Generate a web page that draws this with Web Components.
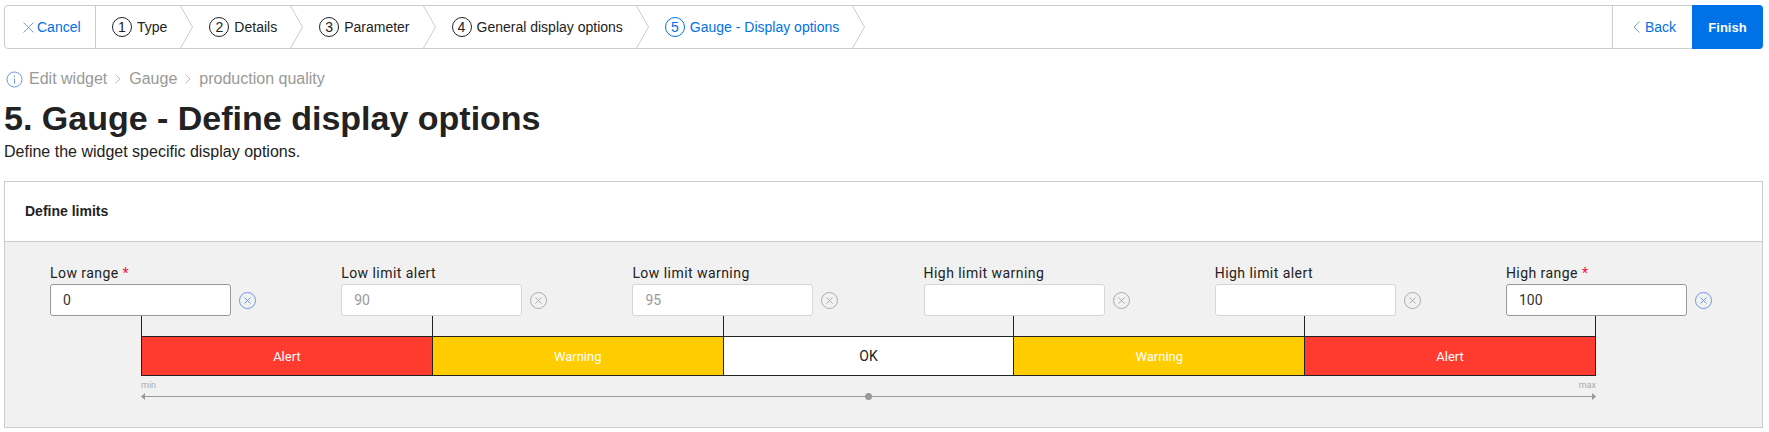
<!DOCTYPE html>
<html lang="en">
<head>
<meta charset="utf-8">
<title>Edit widget</title>
<style>
  body {
    margin: 0;
    background: #fff;
    color: #222;
    font-family: "Liberation Sans", Arial, sans-serif;
  }
  .page {
    padding: 5px 6px 0 4px;
  }
</style>
</head>
<body>
<div class="page">
  <wizard-bar>
    <wizard-step number="1">Type</wizard-step>
    <wizard-step number="2">Details</wizard-step>
    <wizard-step number="3">Parameter</wizard-step>
    <wizard-step number="4">General display options</wizard-step>
    <wizard-step number="5" active>Gauge - Display options</wizard-step>
  </wizard-bar>
  <page-head crumbs="Edit widget|Gauge|production quality" heading="5. Gauge - Define display options">
    Define the widget specific display options.
  </page-head>
  <limits-card heading="Define limits">
    <limit-field label="Low range" required value="0" active></limit-field>
    <limit-field label="Low limit alert" value="90"></limit-field>
    <limit-field label="Low limit warning" value="95"></limit-field>
    <limit-field label="High limit warning"></limit-field>
    <limit-field label="High limit alert"></limit-field>
    <limit-field label="High range" required value="100" active></limit-field>
    <gauge-scale slot="gauge"></gauge-scale>
  </limits-card>
</div>

<script>
class WizardBar extends HTMLElement {
  constructor() {
    super();
    this.attachShadow({ mode: 'open' });
    this.shadowRoot.innerHTML = `
      <style>
        :host {
          display: flex;
          height: 44px;
          box-sizing: border-box;
          border: 1px solid #ccc;
          border-radius: 4px;
          font-size: 14px;
          background: #fff;
        }
        .cancel, .back {
          display: flex;
          align-items: center;
          color: #0071e6;
          box-sizing: border-box;
        }
        .cancel {
          width: 91px;
          padding-left: 18px;
          gap: 3px;
          border-right: 1px solid #ccc;
        }
        .steps {
          display: flex;
          flex: 1;
        }
        .back {
          width: 80px;
          padding-left: 20px;
          gap: 5px;
          border-left: 1px solid #ccc;
        }
        .finish {
          display: flex;
          align-items: center;
          justify-content: center;
          width: 71px;
          margin: -1px -1px -1px 0;
          background: #0071e6;
          color: #fff;
          font-weight: bold;
          font-size: 13px;
          border-radius: 0 4px 4px 0;
        }
        svg { display: block; flex: none; }
      </style>
      <div class="cancel">
        <svg width="11" height="11" viewBox="0 0 11 11" fill="none" stroke="#7d9fe8" stroke-width="1"><path d="M.5.5l10 10M10.5.5l-10 10"/></svg>
        <span>Cancel</span>
      </div>
      <div class="steps"><slot></slot></div>
      <div class="back">
        <svg width="7" height="12" viewBox="0 0 7 12" fill="none" stroke="#7d9fe8" stroke-width="1"><path d="M6.5.5L1 6l5.5 5.5"/></svg>
        <span>Back</span>
      </div>
      <div class="finish">Finish</div>
    `;
  }
}

class WizardStep extends HTMLElement {
  constructor() {
    super();
    this.attachShadow({ mode: 'open' });
    this.shadowRoot.innerHTML = `
      <style>
        :host {
          display: flex;
          align-items: center;
          padding-left: 16px;
          color: #222;
        }
        :host([active]) { color: #0071e6; }
        .num {
          width: 20px;
          height: 20px;
          box-sizing: border-box;
          border: 1px solid currentColor;
          border-radius: 50%;
          display: flex;
          align-items: center;
          justify-content: center;
          margin-right: 5px;
          font-size: 14px;
        }
        .label { margin-right: 13px; white-space: nowrap; }
        svg { display: block; flex: none; }
      </style>
      <span class="num"></span>
      <span class="label"><slot></slot></span>
      <svg width="13" height="42" viewBox="0 0 13 42" fill="none" stroke="#ccc" stroke-width="1"><path d="M.5 0L12.5 21L.5 42"/></svg>
    `;
  }

  connectedCallback() {
    this.shadowRoot.querySelector('.num').textContent = this.getAttribute('number');
  }
}

class PageHead extends HTMLElement {
  constructor() {
    super();
    this.attachShadow({ mode: 'open' });
    this.shadowRoot.innerHTML = `
      <style>
        :host { display: block; }
        .crumbs {
          display: flex;
          align-items: center;
          height: 20px;
          margin-top: 20px;
          padding-left: 2px;
          color: #999;
          font-size: 16px;
        }
        .crumbs svg { display: block; flex: none; }
        .info { margin-right: 6px; }
        .sep { margin: 0 8px; }
        h1 {
          margin: 9px 0 0;
          font-size: 34px;
          line-height: 40px;
          font-weight: bold;
          color: #222;
        }
        p {
          margin: 4px 0 0;
          font-size: 16px;
          line-height: 20px;
          color: #222;
        }
      </style>
      <div class="crumbs"></div>
      <h1></h1>
      <p><slot></slot></p>
    `;
  }

  connectedCallback() {
    this.shadowRoot.querySelector('h1').textContent = this.getAttribute('heading');
    const info = `<svg class="info" width="17" height="17" viewBox="0 0 17 17" fill="none" stroke="#6f96e8"><circle cx="8.5" cy="8.5" r="7.5"/><path d="M8.5 7.5v5M8.5 4.5v1.5"/></svg>`;
    const sep = `<svg class="sep" width="6" height="10" viewBox="0 0 6 10" fill="none" stroke="#bbb"><path d="M.5.5L5 5 .5 9.5"/></svg>`;
    const parts = this.getAttribute('crumbs').split('|').map(c => `<span>${c}</span>`);
    this.shadowRoot.querySelector('.crumbs').innerHTML = info + parts.join(sep);
  }
}

class LimitsCard extends HTMLElement {
  constructor() {
    super();
    this.attachShadow({ mode: 'open' });
    this.shadowRoot.innerHTML = `
      <style>
        :host {
          display: block;
          margin-top: 19px;
          border: 1px solid #ccc;
          background: #f1f1f1;
        }
        header {
          height: 60px;
          box-sizing: border-box;
          display: flex;
          align-items: center;
          padding: 0 0 2px 20px;
          background: #fff;
          border-bottom: 1px solid #ccc;
          font-size: 14px;
          font-weight: bold;
          color: #222;
        }
        .fields {
          display: flex;
          justify-content: space-between;
          padding: 21px 46px 0 45px;
        }
        .gauge { padding: 0 166px 0 136px; height: 111px; }
      </style>
      <header></header>
      <div class="fields"><slot></slot></div>
      <div class="gauge"><slot name="gauge"></slot></div>
    `;
  }

  connectedCallback() {
    this.shadowRoot.querySelector('header').textContent = this.getAttribute('heading');
  }
}

class LimitField extends HTMLElement {
  constructor() {
    super();
    this.attachShadow({ mode: 'open' });
    this.shadowRoot.innerHTML = `
      <style>
        :host {
          display: grid;
          grid-template-columns: 181px 29px;
          width: 210px;
          font-family: Roboto, "Liberation Sans", sans-serif;
          font-size: 14px;
          color: #222;
        }
        .label {
          grid-column: 1 / 3;
          height: 21px;
          line-height: 20px;
          letter-spacing: .45px;
        }
        .label b { color: #f0143c; font-weight: normal; }
        .box {
          height: 32px;
          box-sizing: border-box;
          border: 1px solid #d6d6d6;
          border-radius: 3px;
          background: #fff;
          padding-left: 12px;
          line-height: 30px;
          color: #999;
        }
        :host([active]) .box { border-color: #999; color: #333; }
        svg { display: block; align-self: center; margin-left: 8px; color: #aaa; }
        :host([active]) svg { color: #6f96e8; }
      </style>
      <div class="label"></div>
      <div class="box"></div>
      <svg width="17" height="17" viewBox="0 0 17 17" fill="none" stroke="currentColor" stroke-width="1"><circle cx="8.5" cy="8.5" r="8"/><path d="M5.5 5.5l6 6M11.5 5.5l-6 6"/></svg>
    `;
  }

  connectedCallback() {
    const label = this.shadowRoot.querySelector('.label');
    label.textContent = this.getAttribute('label');
    if (this.hasAttribute('required')) {
      label.insertAdjacentHTML('beforeend', ' <b>*</b>');
    }
    this.shadowRoot.querySelector('.box').textContent = this.getAttribute('value') || '';
  }
}

class GaugeScale extends HTMLElement {
  constructor() {
    super();
    this.attachShadow({ mode: 'open' });
    this.shadowRoot.innerHTML = `
      <style>
        :host {
          display: block;
          font-family: Roboto, "Liberation Sans", sans-serif;
          font-size: 13px;
        }
        .ticks {
          display: flex;
          height: 20px;
          border-right: 1px solid #222;
        }
        .ticks i { flex: 1; border-left: 1px solid #222; }
        .bar {
          display: flex;
          height: 40px;
          box-sizing: border-box;
          border: 1px solid #222;
        }
        .bar span {
          flex: 1;
          display: flex;
          align-items: center;
          justify-content: center;
          color: #fff;
        }
        .bar span + span { border-left: 1px solid #222; }
        .alert { background: #ff3b30; }
        .warn { background: #ffcc00; }
        .bar .ok { background: #fff; color: #222; font-size: 14px; }
        .ends {
          display: flex;
          justify-content: space-between;
          height: 16px;
          padding-top: 4px;
          box-sizing: border-box;
          font-size: 9px;
          line-height: 11px;
          color: #aaa;
        }
        svg { display: block; width: 100%; height: 9px; overflow: visible; }
      </style>
      <div class="ticks"><i></i><i></i><i></i><i></i><i></i></div>
      <div class="bar">
        <span class="alert">Alert</span>
        <span class="warn">Warning</span>
        <span class="ok">OK</span>
        <span class="warn">Warning</span>
        <span class="alert">Alert</span>
      </div>
      <div class="ends"><span>min</span><span>max</span></div>
      <svg viewBox="0 0 1455 9" preserveAspectRatio="none" fill="#999">
        <path d="M0 4h1455v1H0z"/>
        <path d="M0 4.5L4 1v7zM1455 4.5L1451 1v7z"/>
        <circle cx="727.5" cy="4.5" r="3.5"/>
      </svg>
    `;
  }
}

customElements.define('wizard-bar', WizardBar);
customElements.define('wizard-step', WizardStep);
customElements.define('page-head', PageHead);
customElements.define('limits-card', LimitsCard);
customElements.define('limit-field', LimitField);
customElements.define('gauge-scale', GaugeScale);
</script>
</body>
</html>
